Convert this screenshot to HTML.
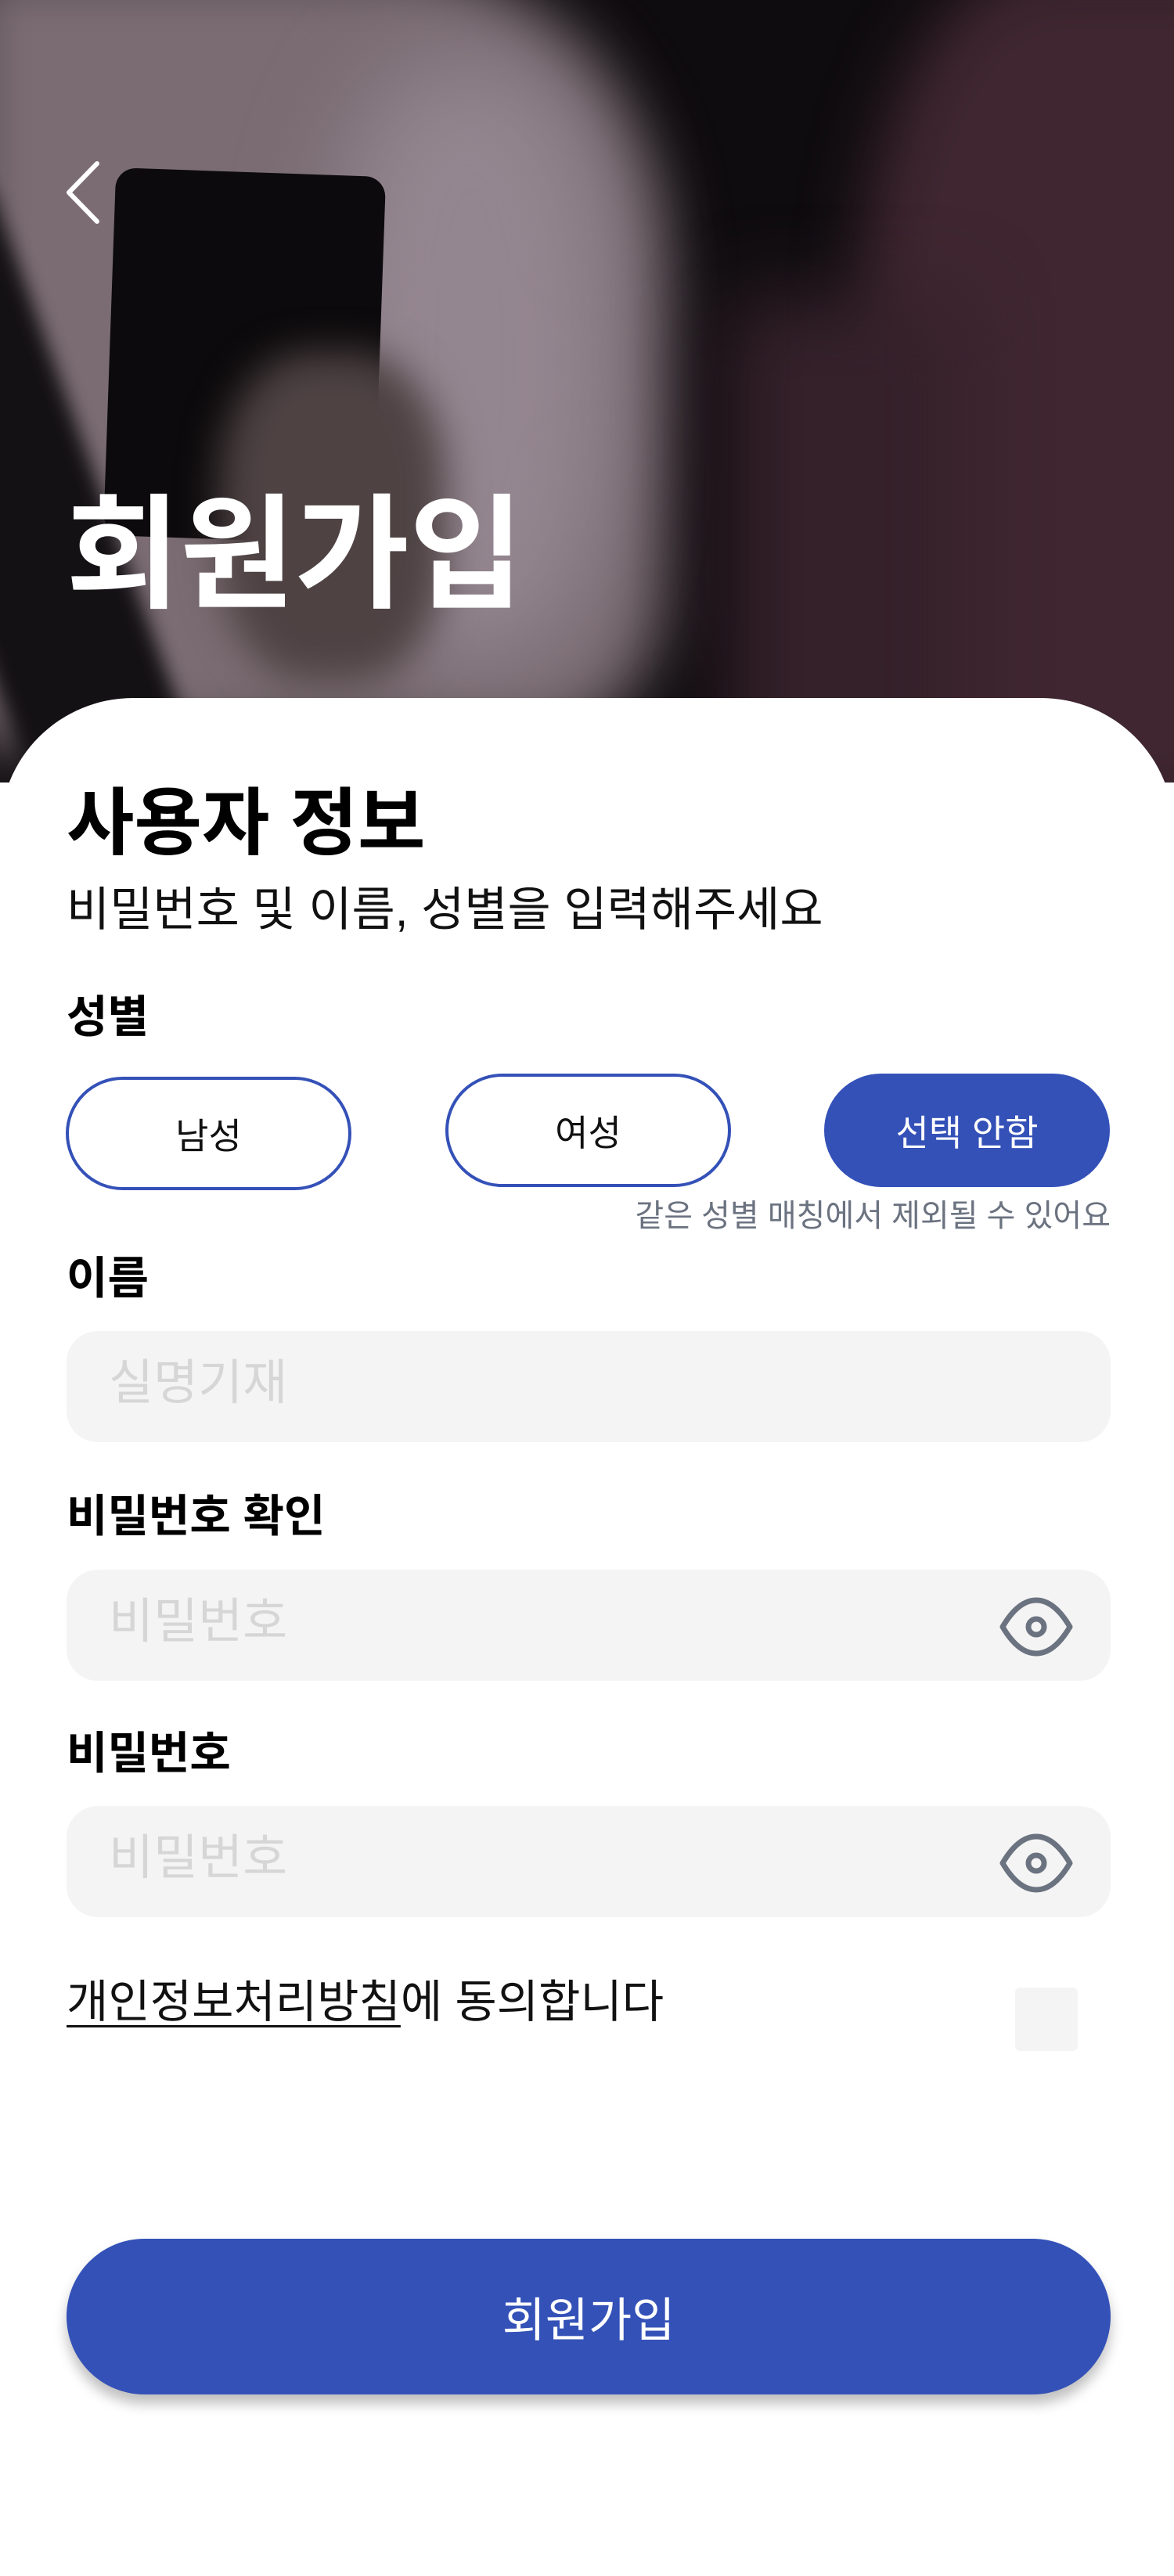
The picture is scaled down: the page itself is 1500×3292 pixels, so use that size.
<!DOCTYPE html>
<html><head><meta charset="utf-8"><style>
*{margin:0;padding:0;box-sizing:border-box}
body{width:1500px;height:3248px;background:#fff;font-family:"Liberation Sans","Noto Sans CJK KR",sans-serif;position:relative;overflow:hidden}
.bg{position:absolute;left:0;top:0;width:1500px;height:1000px;background:#0f0c0f;overflow:hidden}
.bg div{position:absolute}
.abs{position:absolute}
.lbl{position:absolute;left:85px;font-weight:700;font-size:57px;color:#000;line-height:1}
.inp{position:absolute;left:85px;width:1334px;height:142px;background:#f4f4f4;border-radius:40px}
.ph{position:absolute;left:54px;top:36px;font-size:62px;color:#d6d6d6;line-height:1}
.btn{position:absolute;height:145px;width:365px;border:4px solid #3451b8;border-radius:73px;font-size:46px;display:flex;align-items:center;justify-content:center;color:#111}
</style></head><body>
<div class="bg">
  <div style="left:-50px;top:-50px;width:900px;height:1000px;background:#7a6c72;filter:blur(40px);border-radius:0 40% 20% 0"></div>
  <div style="left:420px;top:80px;width:360px;height:760px;background:#948690;filter:blur(60px);border-radius:40%"></div>
  <div style="left:-80px;top:250px;width:210px;height:800px;background:#141114;transform:rotate(-20deg);filter:blur(12px)"></div>
  <div style="left:1100px;top:-50px;width:600px;height:1100px;background:#3f2630;filter:blur(40px);border-radius:40% 0 0 20%"></div>
  <div style="left:930px;top:380px;width:300px;height:700px;background:#35212a;filter:blur(50px)"></div>
  <div style="left:140px;top:220px;width:345px;height:470px;background:#0c0a0c;border-radius:26px;transform:rotate(2deg)"></div>
  <div style="left:280px;top:450px;width:290px;height:420px;background:#4e4243;filter:blur(25px);border-radius:40%"></div>
</div>
<svg class="abs" style="left:80px;top:205px" width="50" height="82" viewBox="0 0 50 82"><path d="M44 4 L8 41 L44 78" fill="none" stroke="#fff" stroke-width="6" stroke-linecap="round" stroke-linejoin="round"/></svg>
<div class="abs" style="left:84px;top:630px;font-size:159px;font-weight:700;color:#fff;line-height:1">회원가입</div>
<div class="abs" style="left:0;top:892px;width:1500px;height:2400px;background:#fff;border-radius:170px 170px 0 0"></div>
<div class="abs" style="left:85px;top:1005px;font-size:94px;font-weight:700;line-height:1">사용자 정보</div>
<div class="abs" style="left:85px;top:1133px;font-size:60px;line-height:1;color:#111">비밀번호 및 이름, 성별을 입력해주세요</div>
<div class="lbl" style="top:1272px">성별</div>
<div class="btn" style="left:84px;top:1376px">남성</div>
<div class="btn" style="left:569px;top:1372px">여성</div>
<div class="btn" style="left:1053px;top:1372px;background:#3451b8;border-color:#3451b8;color:#fff">선택 안함</div>
<div class="abs" style="right:81px;top:1534px;font-size:40px;color:#6b7280;line-height:1">같은 성별 매칭에서 제외될 수 있어요</div>
<div class="lbl" style="top:1606px">이름</div>
<div class="inp" style="top:1701px"><div class="ph">실명기재</div></div>
<div class="lbl" style="top:1910px">비밀번호 확인</div>
<div class="inp" style="top:2006px"><div class="ph">비밀번호</div>
<svg class="abs" style="left:1190px;top:34px" width="98" height="78" viewBox="0 0 98 78"><path d="M49 5 C30 5 16 22 6 39 C16 56 30 73 49 73 C68 73 82 56 92 39 C82 22 68 5 49 5 Z" fill="none" stroke="#6b7280" stroke-width="7" stroke-linejoin="round"/><circle cx="49" cy="39" r="10" fill="none" stroke="#6b7280" stroke-width="7"/></svg></div>
<div class="lbl" style="top:2213px">비밀번호</div>
<div class="inp" style="top:2308px"><div class="ph">비밀번호</div>
<svg class="abs" style="left:1190px;top:34px" width="98" height="78" viewBox="0 0 98 78"><path d="M49 5 C30 5 16 22 6 39 C16 56 30 73 49 73 C68 73 82 56 92 39 C82 22 68 5 49 5 Z" fill="none" stroke="#6b7280" stroke-width="7" stroke-linejoin="round"/><circle cx="49" cy="39" r="10" fill="none" stroke="#6b7280" stroke-width="7"/></svg></div>
<div class="abs" style="left:85px;top:2530px;font-size:58px;line-height:1;color:#111"><span style="text-decoration:underline;text-underline-offset:10px;text-decoration-thickness:3px">개인정보처리방침</span>에 동의합니다</div>
<div class="abs" style="left:1297px;top:2540px;width:80px;height:81px;background:#f4f4f4;border-radius:6px"></div>
<div class="abs" style="left:85px;top:2861px;width:1334px;height:199px;background:#3451b8;border-radius:100px;box-shadow:0 12px 16px rgba(0,0,0,0.25);color:#fff;font-size:60px;display:flex;align-items:center;justify-content:center">회원가입</div>
</body></html>
